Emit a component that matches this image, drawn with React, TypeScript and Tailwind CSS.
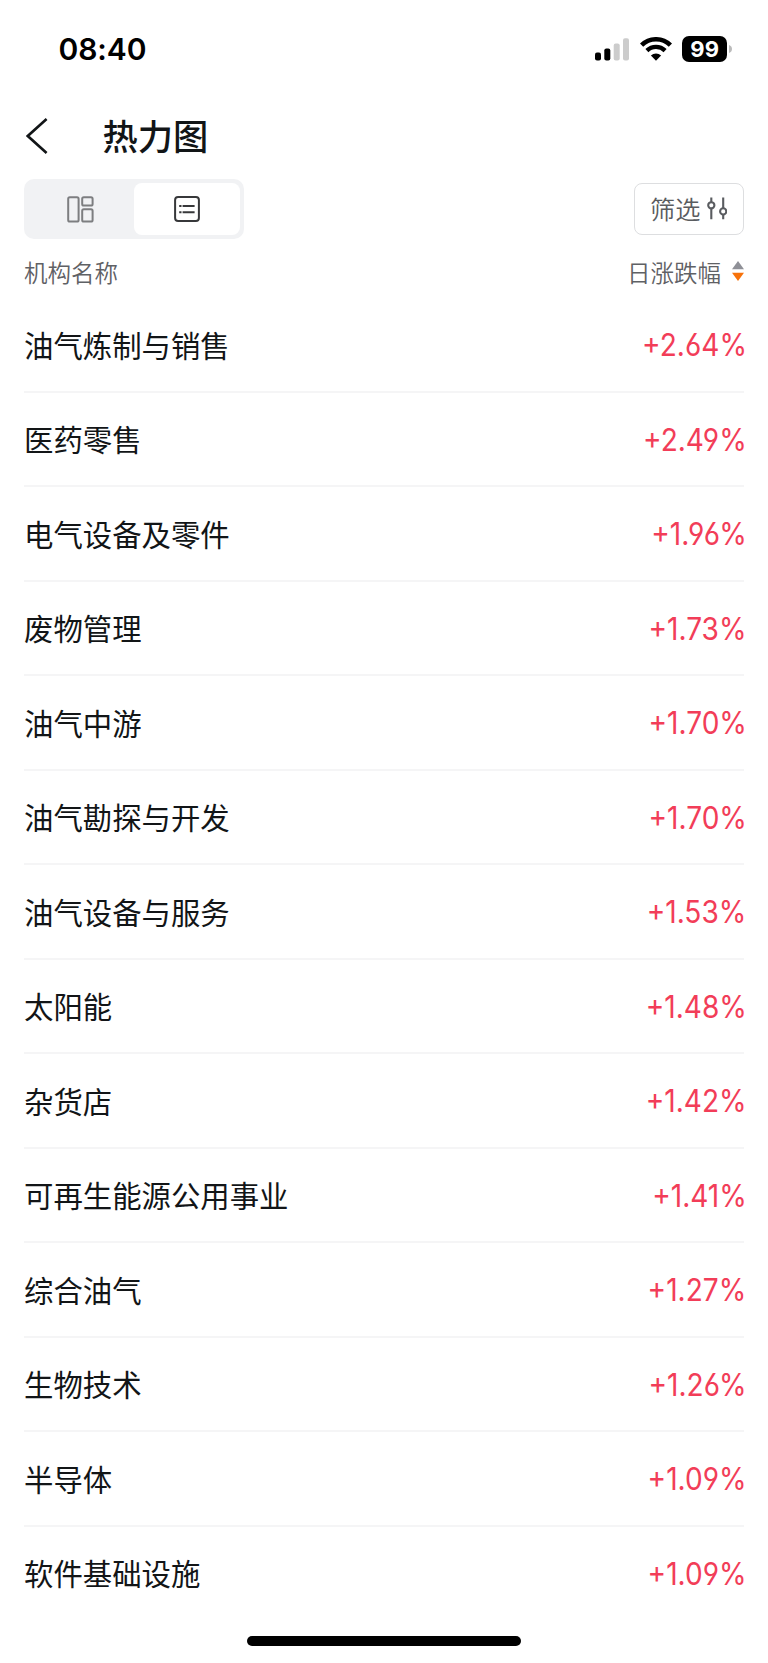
type Row = { name: string; change: string };

const rows: Row[] = [
  { name: '油气炼制与销售', change: '+2.64%' },
  { name: '医药零售', change: '+2.49%' },
  { name: '电气设备及零件', change: '+1.96%' },
  { name: '废物管理', change: '+1.73%' },
  { name: '油气中游', change: '+1.70%' },
  { name: '油气勘探与开发', change: '+1.70%' },
  { name: '油气设备与服务', change: '+1.53%' },
  { name: '太阳能', change: '+1.48%' },
  { name: '杂货店', change: '+1.42%' },
  { name: '可再生能源公用事业', change: '+1.41%' },
  { name: '综合油气', change: '+1.27%' },
  { name: '生物技术', change: '+1.26%' },
  { name: '半导体', change: '+1.09%' },
  { name: '软件基础设施', change: '+1.09%' },
];

function StatusBar() {
  return (
    <div className="flex h-[98px] items-center justify-between pl-[58.5px] pr-9 font-['Inter',sans-serif]">
      <span className="text-[30px] font-semibold leading-none tracking-[-0.1px] text-black">08:40</span>
      <div className="flex items-center">
        <svg className="mr-[11px]" width="34" height="24" viewBox="0 0 34 24">
          <rect x="0" y="15.5" width="6" height="8" rx="2" fill="#000" />
          <rect x="9.3" y="11.5" width="6" height="12" rx="2" fill="#000" />
          <rect x="18.7" y="6.5" width="6" height="17" rx="2" fill="#ccc" />
          <rect x="28" y="1.2" width="6" height="22.3" rx="2" fill="#ccc" />
        </svg>
        <svg className="mr-[10.5px]" width="32" height="24" viewBox="0 0 32 24" fill="none" stroke="#000">
          <path d="M1.6 8.2A20.5 20.5 0 0 1 30.4 8.2" strokeWidth="4.6" />
          <path d="M6.9 13.6A13 13 0 0 1 25.1 13.6" strokeWidth="4.3" />
          <path d="M16 23.8L10.9 18.6A7.4 7.4 0 0 1 21.1 18.6Z" fill="#000" stroke="none" />
        </svg>
        <div className="flex h-[25.5px] w-[44.7px] items-center justify-center rounded-[7px] bg-black text-[22px] font-bold leading-none text-white">
          99
        </div>
        <svg className="ml-[2px]" width="3" height="8" viewBox="0 0 3 8">
          <path d="M0 0Q3 1.2 3 4T0 8Z" fill="#bbb" />
        </svg>
      </div>
    </div>
  );
}

function TitleBar() {
  return (
    <header className="flex h-[76px] items-center pl-[26px]">
      <svg width="22" height="36" viewBox="0 0 22 36" fill="none" stroke="#121517" strokeWidth="2.6">
        <path d="M20.6 1L1.8 18L20.6 35" />
      </svg>
      <h1 className="mb-[3px] ml-[54.5px] text-[35.3px] font-medium leading-none">热力图</h1>
    </header>
  );
}

function Toolbar() {
  return (
    <div className="mt-[5px] flex h-[60px] items-center justify-between px-6">
      <div className="flex h-[60px] w-[220px] rounded-[10px] bg-[#f1f2f4] p-1">
        <div className="flex w-[106px] items-center justify-center pr-px">
          <svg width="27" height="27" viewBox="0 0 27 27" fill="none" stroke="#7d7e80" strokeWidth="2">
            <rect x="1.2" y="1.2" width="10.4" height="24.4" rx="1.6" />
            <rect x="15.2" y="1.2" width="10.4" height="8.4" rx="1.6" />
            <rect x="15.2" y="13.2" width="10.4" height="12.4" rx="1.6" />
          </svg>
        </div>
        <div className="flex w-[106px] items-center justify-center rounded-[8px] bg-white">
          <svg width="26" height="26" viewBox="0 0 26 26" fill="none" stroke="#37383a" strokeWidth="2">
            <rect x="1.1" y="1.1" width="23.8" height="23.8" rx="3" />
            <path d="M5.2 10h2.3M8.6 10h12M5.2 16.3h2.3M8.6 16.3h12" />
          </svg>
        </div>
      </div>
      <button className="mb-px flex h-[52px] w-[110px] items-center rounded-[8px] border border-[#dddee0] pl-[15px] text-[25.2px] font-[350] leading-none text-[#5a5c60]">
        筛选
        <svg className="mb-px ml-[7px]" width="20" height="23" viewBox="0 0 20 23" fill="none" stroke="#5a5c60" strokeWidth="2.1">
          <path d="M4.3 0.5V5M4.3 11.7V22.3M16.2 0.5V11M16.2 17.7V22.3" />
          <circle cx="4.3" cy="8.3" r="3.1" />
          <circle cx="16.2" cy="14.4" r="3.1" />
        </svg>
      </button>
    </div>
  );
}

function ColumnHeader() {
  return (
    <div className="flex h-[59px] items-start justify-between px-6 pt-[22px] text-[23.5px] font-[350] leading-none text-[#5f6165]">
      <span>机构名称</span>
      <span className="flex items-start">
        日涨跌幅
        <svg className="ml-[11px]" width="12" height="20" viewBox="0 0 12 20">
          <path d="M6 0L12 8.2H0Z" fill="#8f9097" />
          <path d="M6 20L12 11.8H0Z" fill="#f7720b" />
        </svg>
      </span>
    </div>
  );
}

export default function App() {
  return (
    <div className="flex h-[1663px] w-[768px] flex-col overflow-hidden bg-white font-['Noto_Sans_CJK_SC',sans-serif] text-[#121517]">
      <StatusBar />
      <TitleBar />
      <Toolbar />
      <ColumnHeader />
      <ul className="px-6">
        {rows.map((row) => (
          <li
            key={row.name}
            className="flex h-[94.5px] items-center justify-between border-b-2 border-[#f5f5f6] last:border-transparent"
          >
            <span className="text-[29.4px] leading-none">{row.name}</span>
            <span className="-mr-[2.5px] mt-[2.5px] origin-right scale-x-[0.92] font-['Inter',sans-serif] text-[30.5px] leading-none text-[#f23d58] [font-feature-settings:'cv03','cv04']">
              {row.change}
            </span>
          </li>
        ))}
      </ul>
      <div className="mx-auto mb-[17px] mt-auto h-[10px] w-[274px] shrink-0 rounded-full bg-black" />
    </div>
  );
}
